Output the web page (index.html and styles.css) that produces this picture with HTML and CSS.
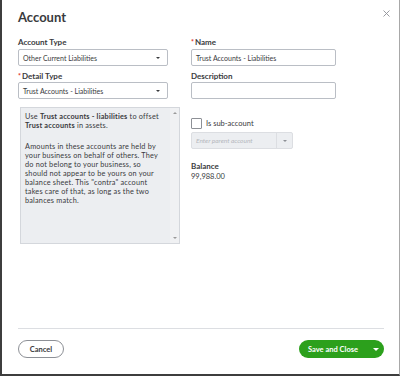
FILE: index.html
```html
<!DOCTYPE html>
<html lang="en">
<head>
<meta charset="utf-8">
<title>Account</title>
<link rel="stylesheet" href="styles.css">
</head>
<body>
<div class="modal">
  <header class="head">
    <h1 class="title">Account</h1>
    <button class="close" aria-label="Close">
      <svg width="7" height="7" viewBox="0 0 7 7"><path d="M0.5 0.5 L6.5 6.5 M6.5 0.5 L0.5 6.5" stroke="#8d9096" stroke-width="0.9" fill="none"/></svg>
    </button>
  </header>
  <div class="body">
    <div class="col col-left">
      <div class="label">Account Type</div>
      <div class="select"><span>Other Current Liabilities</span><span class="caret"></span></div>
      <div class="label label-gap"><span class="req">*</span>Detail Type</div>
      <div class="select"><span>Trust Accounts - Liabilities</span><span class="caret"></span></div>
      <div class="info">
        <div class="info-text">
          <p>Use <b>Trust accounts - liabilities</b> to offset <b>Trust accounts</b> in assets.</p>
          <p>Amounts in these accounts are held by your business on behalf of others. They do not belong to your business, so should not appear to be yours on your balance sheet. This "contra" account takes care of that, as long as the two balances match.</p>
        </div>
        <div class="scrollbar">
          <span class="arrow-up"></span>
          <span class="arrow-down"></span>
        </div>
      </div>
    </div>
    <div class="col col-right">
      <div class="label"><span class="req">*</span>Name</div>
      <div class="input"><span>Trust Accounts - Liabilities</span></div>
      <div class="label label-gap">Description</div>
      <div class="input"></div>
      <div class="check-row"><span class="checkbox"></span><span>Is sub-account</span></div>
      <div class="parent"><span class="placeholder">Enter parent account</span><span class="parent-btn"><span class="caret caret-gray"></span></span></div>
      <div class="bal-label">Balance</div>
      <div class="bal-value">99,988.00</div>
    </div>
  </div>
  <footer class="foot">
    <button class="btn-cancel">Cancel</button>
    <button class="btn-save"><span>Save and Close</span><span class="caret caret-white"></span></button>
  </footer>
</div>
</body>
</html>
```

FILE: styles.css
```css
* { box-sizing: border-box; }
html, body { margin: 0; padding: 0; background: #fff; }
body { font-family: "Lato", "Liberation Sans", sans-serif; color: #393a3d; }

.modal {
  width: 400px;
  height: 376px;
  border-left: 2px solid #3d3d3d;
  border-bottom: 2px solid #3d3d3d;
  border-right: 1px solid #a8a8a8;
  display: flex;
  flex-direction: column;
  background: #fff;
}

.head {
  display: flex;
  justify-content: space-between;
  align-items: flex-start;
  padding: 9px 7px 0 16px;
  height: 37px;
}
.title {
  margin: 0;
  font-size: 13px;
  line-height: 16px;
  font-weight: 700;
  color: #393a3d;
}
.close {
  border: 0;
  background: none;
  padding: 0;
  margin-top: -2px;
  width: 12px;
  height: 12px;
  display: flex;
  align-items: center;
  justify-content: center;
}

.body {
  flex: 1;
  display: flex;
  padding-left: 16px;
  gap: 23px;
}
.col { display: flex; flex-direction: column; }
.col-left { width: 150px; }
.col-right { width: 145px; }

.label {
  font-size: 8px;
  line-height: 10px;
  font-weight: 700;
  height: 10px;
  margin-bottom: 2px;
  color: #393a3d;
}
.label-gap { margin-top: 5px; margin-bottom: 1px; }
.req { color: #e0301e; font-size: 7px; margin-right: 1px; }

.select, .input {
  height: 17px;
  border: 1px solid #babec5;
  border-radius: 2px;
  display: flex;
  align-items: center;
  justify-content: space-between;
  padding: 0 7px 0 4px;
  font-size: 7px;
  color: #393a3d;
  background: #fff;
}
.caret {
  width: 0; height: 0;
  border-left: 2px solid transparent;
  border-right: 2px solid transparent;
  border-top: 2px solid #393a3d;
}
.caret-gray { border-top-color: #8d9096; }
.caret-white { border-left-width: 3px; border-right-width: 3px; border-top: 3px solid #fff; }

.info {
  margin-top: 8px;
  margin-left: 2px;
  width: 160px;
  height: 137px;
  border: 1px solid #d4d7dc;
  background: #eceef1;
  display: flex;
}
.info-text {
  flex: 1;
  padding: 4px 8px 0 4px;
  font-size: 7.3px;
  letter-spacing: 0.2px;
  line-height: 9px;
  color: #393a3d;
}
.info-text p { margin: 0 0 12px 0; }
.info-text b { font-weight: 700; }
.scrollbar {
  width: 9px;
  background: #f0f1f3;
  display: flex;
  flex-direction: column;
  justify-content: space-between;
  align-items: center;
  padding: 4px 0 4px;
}
.arrow-up, .arrow-down {
  width: 0; height: 0;
  border-left: 2px solid transparent;
  border-right: 2px solid transparent;
}
.arrow-up { border-bottom: 2px solid #9a9a9a; }
.arrow-down { border-top: 2px solid #9a9a9a; }

.check-row {
  margin-top: 19px;
  height: 11px;
  display: flex;
  align-items: center;
  gap: 4px;
  font-size: 7.5px;
  color: #393a3d;
}
.checkbox {
  width: 11px; height: 11px;
  border: 1px solid #8d9096;
  border-radius: 1px;
  background: #fff;
}
.parent {
  margin-top: 3px;
  width: 102px;
  height: 17px;
  border: 1px solid #dcdee2;
  border-radius: 2px;
  background: #eceef1;
  display: flex;
  align-items: center;
  font-size: 6.5px;
}
.placeholder {
  flex: 1;
  padding-left: 4px;
  font-style: italic;
  color: #b4b7bd;
}
.parent-btn {
  width: 16px;
  height: 100%;
  border-left: 1px solid #dcdee2;
  display: flex;
  align-items: center;
  justify-content: center;
}
.bal-label {
  margin-top: 12px;
  font-size: 8px;
  line-height: 10px;
  font-weight: 700;
}
.bal-value {
  margin-top: 1px;
  font-size: 7.5px;
  line-height: 10px;
  color: #393a3d;
}

.foot {
  margin: 0 15px 0 16px;
  border-top: 1px solid #dcdee2;
  height: 46px;
  display: flex;
  justify-content: space-between;
  align-items: flex-start;
  padding-top: 11px;
}
.btn-cancel {
  width: 46px;
  height: 18px;
  border: 1px solid #8d9096;
  border-radius: 9px;
  background: #fff;
  font-family: inherit;
  font-size: 7.5px;
  font-weight: 700;
  color: #393a3d;
  padding: 0;
}
.btn-save {
  width: 85px;
  height: 18px;
  border: 0;
  border-radius: 9px;
  background: #2ca01c;
  color: #fff;
  font-family: inherit;
  font-size: 7.5px;
  font-weight: 700;
  display: flex;
  align-items: center;
  justify-content: space-between;
  padding: 0 5px 0 9px;
}
```
